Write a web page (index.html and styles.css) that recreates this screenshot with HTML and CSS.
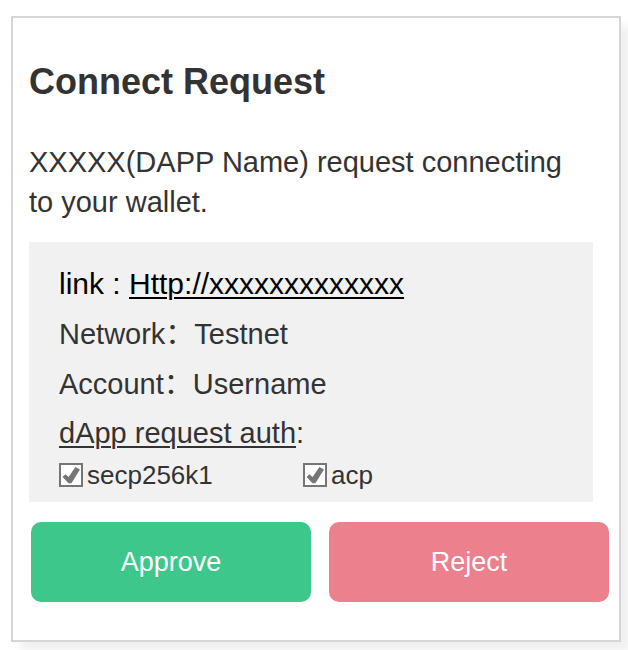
FILE: index.html
```html
<!DOCTYPE html>
<html lang="en">
<head>
<meta charset="utf-8">
<meta name="viewport" content="width=device-width, initial-scale=1">
<title>Connect Request</title>
<link rel="stylesheet" href="styles.css">
</head>
<body>
<main class="card">
  <h1 class="title">Connect Request</h1>
  <p class="message">XXXXX(DAPP Name) request connecting to your wallet.</p>
  <section class="details">
    <p class="row row-link">link : <a href="#">Http://xxxxxxxxxxxxx</a></p>
    <p class="row">Network：Testnet</p>
    <p class="row">Account：Username</p>
    <fieldset class="auth">
      <legend class="auth-title"><u>dApp request auth</u>:</legend>
      <div class="options">
        <label class="option"><input type="checkbox" checked><span>secp256k1</span></label>
        <label class="option"><input type="checkbox" checked><span>acp</span></label>
      </div>
    </fieldset>
  </section>
  <div class="actions">
    <button type="button" class="button approve">Approve</button>
    <button type="button" class="button reject">Reject</button>
  </div>
</main>
</body>
</html>
```

FILE: styles.css
```css
* {
  box-sizing: border-box;
}

body {
  margin: 0;
  padding: 16px 7px 8px 11px;
  background: #fff;
  color: #333;
  font-family: "Liberation Sans", "Noto Sans CJK SC", sans-serif;
  font-size: 29px;
  overflow: hidden;
}

.card {
  padding: 40px 10px 38px 16px;
  border: 2px solid #d6d6d6;
  background: #fff;
  box-shadow: 10px 10px 10px #f0f0f0;
}

.title {
  margin: 0 0 36px;
  font-size: 36px;
  line-height: 48px;
}

.message {
  margin: 0 16px 20px 0;
  line-height: 40px;
}

.details {
  margin: 0 16px 20px 0;
  padding: 17px 30px 10px;
  background: #f1f1f1;
}

.row {
  margin: 0;
  line-height: 50px;
}

.row-link {
  color: #000;
  font-size: 30px;
}

.row-link a {
  color: inherit;
}

a,
u {
  text-decoration-thickness: 2px;
  text-underline-offset: 3px;
}

.auth {
  margin: 0;
  padding: 0;
  border: 0;
}

.auth-title {
  padding: 0 0 1px;
  line-height: 48px;
}

.options {
  display: grid;
  grid-template-columns: 1fr 1fr;
  padding-right: 16px;
}

.option {
  display: flex;
  align-items: center;
  gap: 4px;
  font-size: 26px;
  line-height: 34px;
}

.option input {
  appearance: none;
  width: 24px;
  height: 24px;
  margin: 0;
  border: 2px solid #767676;
  background: #fff;
}

.option input:checked::before {
  content: "";
  display: block;
  height: 20px;
  background: #767676;
  clip-path: polygon(8% 60%, 22% 46%, 38% 60%, 72% 10%, 95% 22%, 52% 91%, 38% 91%);
}

.actions {
  display: flex;
  gap: 18px;
  padding-left: 2px;
}

.button {
  flex: 1;
  height: 80px;
  padding: 0;
  border: 0;
  border-radius: 10px;
  color: #fff;
  font-family: inherit;
  font-size: 27px;
}

.approve {
  background: #3ec78b;
}

.reject {
  background: #ed808d;
}
```
